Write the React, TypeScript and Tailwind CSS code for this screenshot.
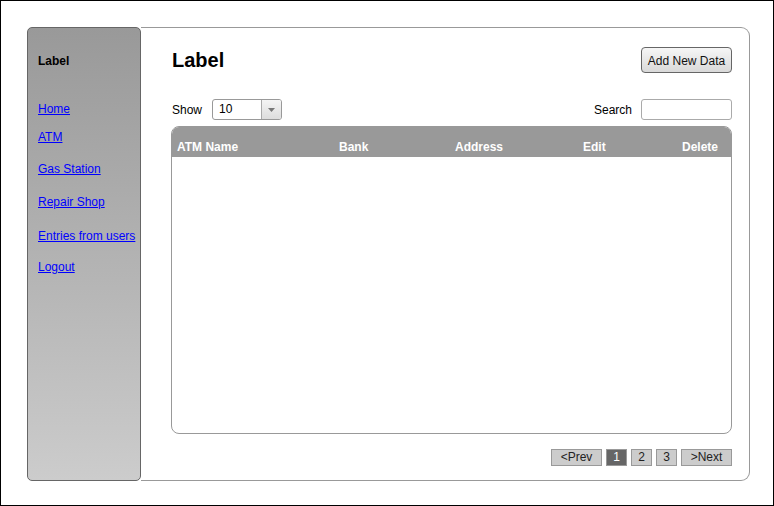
const links = [
  { text: 'Home', mt: 'mt-[34px]' },
  { text: 'ATM', mt: 'mt-[14px]' },
  { text: 'Gas Station', mt: 'mt-[18px]' },
  { text: 'Repair Shop', mt: 'mt-[19px]' },
  { text: 'Entries from users', mt: 'mt-[20px]' },
  { text: 'Logout', mt: 'mt-[17px]' },
];

const Sidebar = () => (
  <div className="w-[114px] shrink-0 rounded-[5px] border border-[#666] bg-gradient-to-b from-[#999] to-[#ccc] pl-[10px] pt-[26px]">
    <div className="text-xs font-bold leading-[14px] text-black">Label</div>
    {links.map((l) => (
      <a
        key={l.text}
        href="#"
        className={`${l.mt} block whitespace-nowrap text-xs leading-[14px] text-[#0000ff] underline`}
      >
        {l.text}
      </a>
    ))}
  </div>
);

const Pager = () => (
  <div className="mt-[15px] flex justify-end gap-[4px] text-xs leading-[15px]">
    <button className="h-[17px] w-[51px] border border-[#999] bg-[#ccc] text-[#222]">&lt;Prev</button>
    <button className="h-[17px] w-[21px] border border-[#999] bg-[#666] text-white">1</button>
    <button className="h-[17px] w-[21px] border border-[#999] bg-[#ccc] text-[#222]">2</button>
    <button className="h-[17px] w-[21px] border border-[#999] bg-[#ccc] text-[#222]">3</button>
    <button className="h-[17px] w-[51px] border border-[#999] bg-[#ccc] text-[#222]">&gt;Next</button>
  </div>
);

export default function App() {
  return (
    <div className="h-[506px] w-[774px] border border-black bg-white p-[26px] font-['Liberation_Sans',Arial,sans-serif] text-black">
      <div className="flex h-[454px] w-[723px]">
        <Sidebar />
        <div className="flex flex-1 flex-col rounded-r-[9px] border-y border-r border-[#999] pl-[30px] pr-[17px] pt-[19px]">
          <div className="flex h-[26px] items-center justify-between pl-px">
            <h1 className="text-xl font-bold leading-6">Label</h1>
            <button className="h-[26px] w-[91px] rounded-[4px] border border-[#666] bg-gradient-to-b from-[#f6f6f6] to-[#d9d9d9] pt-px text-xs text-[#111]">
              Add New Data
            </button>
          </div>

          <div className="mt-[26px] flex h-[21px] items-center justify-between pl-px text-xs">
            <div className="flex items-center">
              <span>Show</span>
              <div className="ml-[10px] flex h-[21px] w-[70px] overflow-hidden rounded-[3px] border border-[#999] bg-white">
                <span className="flex-1 pl-[6px] leading-[19px]">10</span>
                <span className="flex w-[20px] items-center justify-center border-l border-[#aaa] bg-gradient-to-b from-[#f4f4f4] to-[#ddd]">
                  <svg width="7" height="4" viewBox="0 0 7 4">
                    <path d="M0 0h7L3.5 4z" fill="#777" />
                  </svg>
                </span>
              </div>
            </div>
            <div className="flex items-center">
              <span>Search</span>
              <input className="ml-[9px] h-[21px] w-[91px] rounded-[3px] border border-[#aaa] bg-white outline-none" />
            </div>
          </div>

          <div className="mt-[6px] h-[308px] overflow-hidden rounded-[8px] border border-[#999]">
            <div className="-mx-px -mt-px flex h-[31px] items-end bg-[#999] pb-[3px] pl-[6px] text-xs font-bold leading-[14px] text-white">
              <span className="w-[162px]">ATM Name</span>
              <span className="w-[116px]">Bank</span>
              <span className="w-[128px]">Address</span>
              <span className="w-[99px]">Edit</span>
              <span>Delete</span>
            </div>
          </div>

          <Pager />
        </div>
      </div>
    </div>
  );
}
